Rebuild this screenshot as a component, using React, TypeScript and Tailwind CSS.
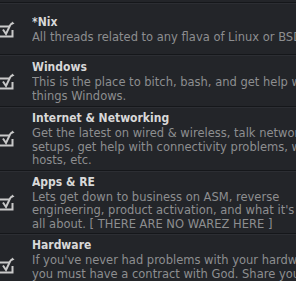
import React from 'react';

interface ForumRowProps {
  title: string;
  lines: string[];
}

function CheckIcon() {
  return (
    <svg width="16" height="18" viewBox="0 0 16 18" className="shrink-0">
      <path d="M-4 5.5H9.5M12.5 9V15.5H-4" fill="none" stroke="#c9c9c9" strokeWidth="2" />
      <path d="M3 8.5L6 13L10 4.5L12 2" fill="none" stroke="#c9c9c9" strokeWidth="2" />
      <path d="M12 0.5L14.5 2.5L11.5 4Z" fill="#c9c9c9" />
    </svg>
  );
}

function ForumRow({ title, lines }: ForumRowProps) {
  return (
    <div className="flex items-center min-h-[52px] border-t border-[#15171a] shadow-[inset_0_1px_0_#2c2e33] pt-[4px] pb-[2px]">
      <div className="w-[32px] flex items-center">
        <CheckIcon />
      </div>
      <div className="flex-1 min-w-0 overflow-hidden">
        <div className="text-[12px] leading-[15px] font-bold text-[#d8d8d8] whitespace-nowrap font-['DejaVu_Sans_Condensed','DejaVu_Sans',sans-serif]">
          {title}
        </div>
        <div className="mt-px">
          {lines.map((l, i) => (
            <div key={i} className="text-[11.5px] leading-[13.5px] text-[#8d8e90] whitespace-nowrap">
              {l}
            </div>
          ))}
        </div>
      </div>
    </div>
  );
}

export default function App() {
  return (
    <div className="w-[296px] h-[281px] overflow-hidden bg-[#232529] pt-[2px] font-['DejaVu_Sans',sans-serif]">
      <ForumRow title="*Nix" lines={['All threads related to any flava of Linux or BSD']} />
      <ForumRow
        title="Windows"
        lines={['This is the place to bitch, bash, and get help with', 'things Windows.']}
      />
      <ForumRow
        title="Internet & Networking"
        lines={[
          'Get the latest on wired & wireless, talk networking',
          'setups, get help with connectivity problems, web',
          'hosts, etc.',
        ]}
      />
      <ForumRow
        title="Apps & RE"
        lines={[
          'Lets get down to business on ASM, reverse',
          "engineering, product activation, and what it's really",
          'all about. [ THERE ARE NO WAREZ HERE ]',
        ]}
      />
      <ForumRow
        title="Hardware"
        lines={[
          "If you've never had problems with your hardware",
          'you must have a contract with God. Share your',
          'experiences here.',
        ]}
      />
    </div>
  );
}
